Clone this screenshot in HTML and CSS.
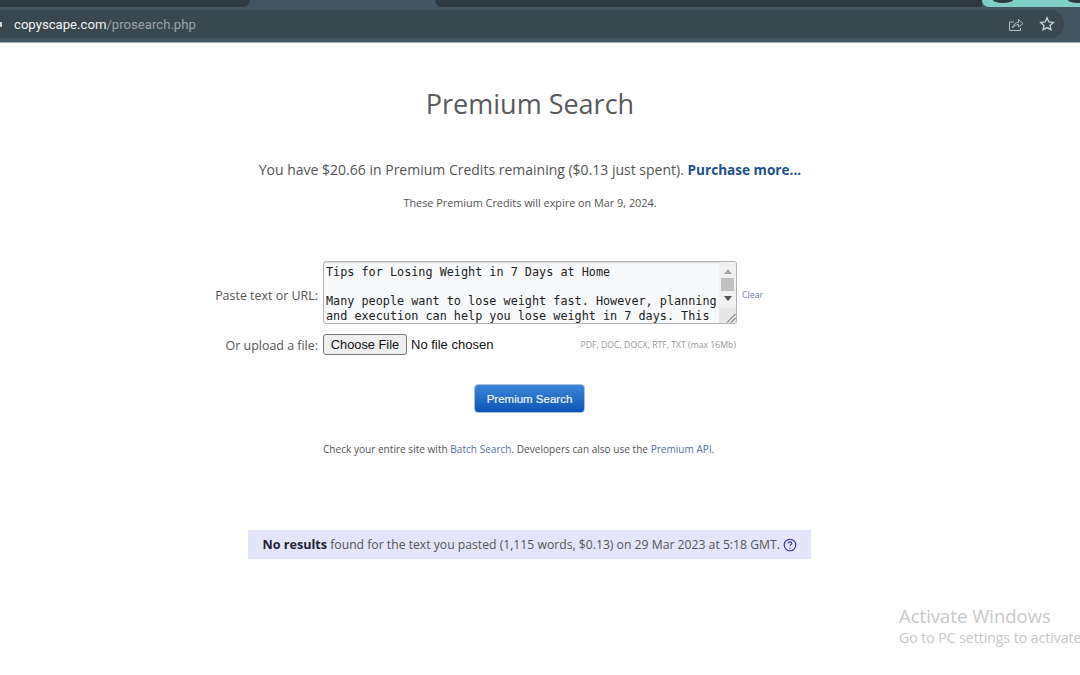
FILE: index.html
```html
<!DOCTYPE html>
<html lang="en">
<head>
<meta charset="utf-8">
<title>Premium Search</title>
<link rel="stylesheet" href="styles.css">
</head>
<body>
<header class="chrome">
  <div class="tabs">
    <div class="tab tab-a"></div>
    <div class="tab-gap"></div>
    <div class="tab tab-b"></div>
    <div class="tab-active"><span class="dot dot-a"></span><span class="dot dot-b"></span></div>
  </div>
  <div class="toolbar">
    <div class="omnibox">
      <span class="lock"></span>
      <span class="url"><span class="host">copyscape.com</span>/prosearch.php</span>
      <svg class="tool-icon share" viewBox="0 0 16 16" width="16" height="16" fill="none" stroke="#b4babd" stroke-width="1"><path d="M1.500 6v8.500h11V12"/><path d="M1.500 6H6"/><path d="M4.500 12C5 8.500 7.500 6.500 10.500 6.500V3.500L15 7.500 10.500 11V8.500C8 8.500 6 9.800 4.500 12Z"/></svg>
      <svg class="tool-icon star" viewBox="0 0 16 16" width="16" height="16" fill="none" stroke="#d0d4d6" stroke-width="1.300"><path d="M8 1.800l1.900 4.100 4.400.5-3.300 3 .9 4.400L8 11.600l-3.900 2.200.9-4.400-3.300-3 4.400-.5z"/></svg>
    </div>
  </div>
</header>
<main class="page">
  <h1 class="title">Premium Search</h1>
  <p class="credits">You have $20.66 in Premium Credits remaining ($0.13 just spent). <a class="purchase" href="#">Purchase more...</a></p>
  <p class="expire">These Premium Credits will expire on Mar 9, 2024.</p>
  <form class="search-form">
    <div class="row row-text">
      <label class="label label-text" for="txt">Paste text or URL:</label>
      <div class="text-box" id="txt">
        <div class="text-content">Tips for Losing Weight in 7 Days at Home

Many people want to lose weight fast. However, planning
and execution can help you lose weight in 7 days. This</div>
        <div class="scrollbar">
          <svg class="arrow" viewBox="0 0 8 5" width="8" height="5"><path d="M4 0l4 5H0z" fill="#a3a3a3"/></svg>
          <span class="thumb"></span>
          <svg class="arrow arrow-down" viewBox="0 0 8 5" width="8" height="5"><path d="M0 0h8L4 5z" fill="#505050"/></svg>
          <span class="corner"><svg viewBox="0 0 10 10" width="10" height="10" fill="none" stroke="#555" stroke-width="1"><path d="M1 9.500L9.500 1M5 9.500L9.500 5"/></svg></span>
        </div>
      </div>
      <a class="clear" href="#">Clear</a>
    </div>
    <div class="row row-file">
      <label class="label label-file">Or upload a file:</label>
      <div class="file-wrap">
        <span class="file-btn">Choose File</span>
        <span class="file-name">No file chosen</span>
        <span class="file-hint">PDF, DOC, DOCX, RTF, TXT (max 16Mb)</span>
      </div>
    </div>
    <button class="submit" type="button">Premium Search</button>
  </form>
  <p class="note">Check your entire site with <a href="#">Batch Search</a>. Developers can also use the <a href="#">Premium API</a>.</p>
  <div class="result">
    <span class="result-text"><b>No results</b> found for the text you pasted (1,115 words, $0.13) on 29 Mar 2023 at 5:18 GMT.</span>
    <svg class="help" viewBox="0 0 14 14" width="14" height="14"><circle cx="7" cy="7" r="5.800" fill="none" stroke="#2c2ca8" stroke-width="1.100"/><path d="M5.200 5.500C5.300 4.400 6 3.900 7 3.900S8.900 4.500 8.900 5.400C8.900 6.600 7 6.600 7 8.100" fill="none" stroke="#2c2ca8" stroke-width="1.100"/><circle cx="7" cy="10" r=".7" fill="#2c2ca8"/></svg>
  </div>
</main>
<aside class="watermark">
  <div class="wm-title">Activate Windows</div>
  <div class="wm-sub">Go to PC settings to activate</div>
</aside>
</body>
</html>
```
FILE: styles.css
```css
* { box-sizing: border-box; }
html, body { margin: 0; padding: 0; }
body {
  width: 1080px;
  height: 675px;
  overflow: hidden;
  background: #fff;
  font-family: "Open Sans", "Noto Sans", sans-serif;
  color: #555;
  position: relative;
}
.chrome { height: 43px; background: #435660; border-bottom: 1px solid #a9b2b6; }
.tabs { height: 10px; display: flex; overflow: hidden; }
.tab { height: 7px; background: #2f3a40; flex: none; }
.tab-a { width: 250px; border-radius: 0 0 8px 0; }
.tab-gap { width: 185px; height: 10px; flex: none; }
.tab-b { width: 547px; border-radius: 0 0 0 8px; }
.tab-active { flex: 1; height: 7px; background: #7fcfc4; border-radius: 0 0 0 8px; display: flex; gap: 55px; padding-left: 11px; }
.dot { width: 20px; height: 3px; background: #2f3a40; border-radius: 0 0 50% 50% / 0 0 100% 100%; flex: none; }
.toolbar { height: 32px; }
.omnibox {
  height: 28px;
  width: 1064px;
  background: #39474e;
  border-radius: 0 14px 14px 0;
  display: flex;
  align-items: center;
  padding: 0 9px 0 0;
}
.lock { width: 2px; height: 5px; background: #d5d9db; margin-right: 12px; border-radius: 0 1px 1px 0; }
.url { font-size: 13.150px; color: #9aa4a9; flex: 1; font-family: "Roboto", "Open Sans", sans-serif; }
.host { color: #f1f3f4; }
.tool-icon { display: block; }
.share { margin-right: 15px; }
.page { width: 1060px; display: flex; flex-direction: column; align-items: center; }
.title { margin: 43px 0 0; font-size: 27px; line-height: 36px; font-weight: 400; color: #5a5a5a; }
.credits { margin: 38px 0 0; font-size: 14px; line-height: 19px; color: #555; }
.purchase { font-weight: 700; font-size: 13.600px; color: #22508f; text-decoration: none; }
.expire { margin: 17px 0 0; font-size: 10.850px; line-height: 14px; color: #555; }
.search-form { margin-top: 51px; display: flex; flex-direction: column; align-items: center; width: 100%; }
.row { display: flex; width: 100%; }
.label { width: 318px; flex: none; text-align: right; font-size: 12.450px; color: #555; }
.label-text { padding-top: 5px; }
.label-file { padding-top: 2px; }
.row-text { align-items: center; height: 64px; }
.text-box {
  width: 414px; height: 63px; margin-left: 5px; flex: none; align-self: flex-start;
  border: 1px solid #b4b4b4; border-radius: 3px; background: #f8f9fb;
  display: flex; overflow: hidden; box-shadow: inset 0 1px 1px #ddd;
}
.text-content {
  flex: 1; padding: 3px 0 0 2px; white-space: pre;
  font-family: "DejaVu Sans Mono", monospace; font-size: 11.800px; line-height: 14.600px; color: #222;
  overflow: hidden;
}
.scrollbar { width: 17px; flex: none; background: #f1f1f1; display: flex; flex-direction: column; align-items: center; padding-top: 7px; position: relative; }
.thumb { width: 13px; height: 13px; background: #c1c1c1; margin-top: 4px; }
.arrow-down { margin-top: 5px; }
.corner { position: absolute; bottom: 0; left: 0; width: 17px; height: 15px; background: #e6e6e6; display: flex; align-items: flex-end; justify-content: flex-end; }
.clear { margin-left: 5px; padding-top: 4px; font-size: 8.800px; color: #6f7fa8; text-decoration: none; }
.row-file { margin-top: 8px; height: 22px; align-items: center; }
.file-wrap { display: flex; align-items: center; width: 414px; margin-left: 5px; }
.file-btn {
  width: 84px; height: 21px; background: #efefef; border: 1px solid #767676; border-radius: 3px;
  font-family: "Liberation Sans", Arial, sans-serif; font-size: 12.800px; color: #111;
  display: flex; align-items: center; justify-content: center;
}
.file-name { margin-left: 4px; font-family: "Liberation Sans", Arial, sans-serif; font-size: 13px; color: #111; flex: 1; }
.file-hint { font-size: 8.700px; color: #9a9a9a; padding: 1px 1px 0 0; }
.submit {
  margin: 29px 1px 0 0; width: 111px; height: 29px; border: 1px solid #a9bfd6; border-radius: 4px;
  background: linear-gradient(#3d86da, #0b56b4);
  color: #eef4fb; font-family: "Liberation Sans", Arial, sans-serif; font-size: 11.500px; padding: 0;
  -webkit-text-stroke: 0.2px #eef4fb;
}
.note { margin: 30px 0 0 323px; align-self: flex-start; font-size: 10.080px; line-height: 13px; color: #555; }
.note a { color: #5a6fa5; text-decoration: none; }
.result {
  margin: 74px 2px 0 0; width: 563px; height: 29px; background: #e4e4fb;
  display: flex; align-items: center; padding-left: 15px;
  font-size: 12.200px; color: #555;
}
.result b { color: #222233; font-size: 12.600px; }
.help { margin-left: 3px; }
.watermark { position: absolute; left: 899px; top: 604px; color: #c8c8c8; white-space: nowrap; }
.wm-title { font-size: 18.500px; line-height: 23px; font-family: "Open Sans", sans-serif; }
.wm-sub { font-size: 14px; line-height: 21px; }
```
